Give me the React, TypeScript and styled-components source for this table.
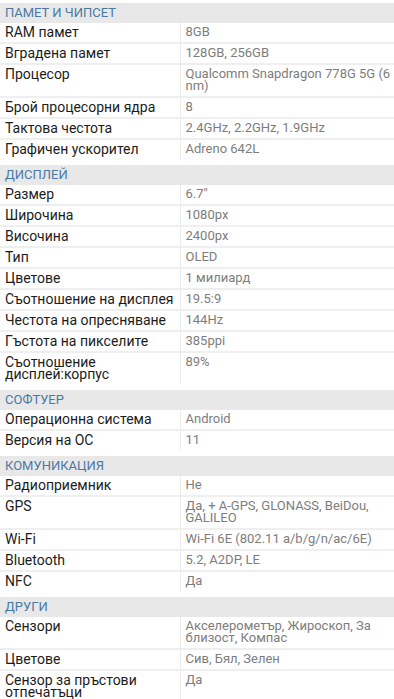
import styled, { createGlobalStyle } from "styled-components";

const GlobalStyle = createGlobalStyle`
  html, body {
    margin: 0;
    padding: 0;
    background: #ffffff;
  }
  body {
    font-family: Roboto, "Noto Sans", sans-serif;
  }
`;

const Page = styled.div`
  width: 394px;
  padding-top: 3px;
`;

const Table = styled.table`
  width: 100%;
  border-collapse: collapse;
  table-layout: fixed;
  margin-bottom: 6px;
`;

const LabelCol = styled.col`
  width: 180px;
`;

const HeadCell = styled.th`
  background: #e8e8e8;
  color: #4a79a6;
  font-size: 13px;
  font-weight: 400;
  text-align: left;
  text-transform: uppercase;
  height: 20px;
  padding: 0 5px;
  line-height: 20px;
`;

const Row = styled.tr`
  border-top: 2px solid #efefef;

  &:first-of-type {
    border-top: 0;
  }
`;

const Label = styled.td`
  padding: 3px 5px 4px 5px;
  font-size: 14px;
  line-height: 12px;
  color: #1c1c1c;
  vertical-align: top;
`;

const Value = styled.td`
  padding: 3px 2px 4px 5px;
  border-left: 1px solid #ececec;
  font-size: 13px;
  line-height: 12px;
  color: #7d7d7d;
  vertical-align: top;
`;

type Section = { title: string; rows: [string, string][] };

const sections: Section[] = [
  {
    title: "Памет и чипсет",
    rows: [
      ["RAM памет", "8GB"],
      ["Вградена памет", "128GB, 256GB"],
      ["Процесор", "Qualcomm Snapdragon 778G 5G (6 nm)"],
      ["Брой процесорни ядра", "8"],
      ["Тактова честота", "2.4GHz, 2.2GHz, 1.9GHz"],
      ["Графичен ускорител", "Adreno 642L"],
    ],
  },
  {
    title: "Дисплей",
    rows: [
      ["Размер", "6.7\""],
      ["Широчина", "1080px"],
      ["Височина", "2400px"],
      ["Тип", "OLED"],
      ["Цветове", "1 милиард"],
      ["Съотношение на дисплея", "19.5:9"],
      ["Честота на опресняване", "144Hz"],
      ["Гъстота на пикселите", "385ppi"],
      ["Съотношение дисплей:корпус", "89%"],
    ],
  },
  {
    title: "Софтуер",
    rows: [
      ["Операционна система", "Android"],
      ["Версия на ОС", "11"],
    ],
  },
  {
    title: "Комуникация",
    rows: [
      ["Радиоприемник", "Не"],
      ["GPS", "Да, + A-GPS, GLONASS, BeiDou, GALILEO"],
      ["Wi-Fi", "Wi-Fi 6E (802.11 a/b/g/n/ac/6E)"],
      ["Bluetooth", "5.2, A2DP, LE"],
      ["NFC", "Да"],
    ],
  },
  {
    title: "Други",
    rows: [
      ["Сензори", "Акселерометър, Жироскоп, За близост, Компас"],
      ["Цветове", "Сив, Бял, Зелен"],
      ["Сензор за пръстови отпечатъци", "Да"],
    ],
  },
];

export default function App() {
  return (
    <Page lang="bg">
      <GlobalStyle />
      {sections.map((s) => (
        <Table key={s.title}>
          <colgroup>
            <LabelCol />
            <col />
          </colgroup>
          <thead>
            <tr>
              <HeadCell colSpan={2}>{s.title}</HeadCell>
            </tr>
          </thead>
          <tbody>
            {s.rows.map(([label, value]) => (
              <Row key={label}>
                <Label>{label}</Label>
                <Value>{value}</Value>
              </Row>
            ))}
          </tbody>
        </Table>
      ))}
    </Page>
  );
}
